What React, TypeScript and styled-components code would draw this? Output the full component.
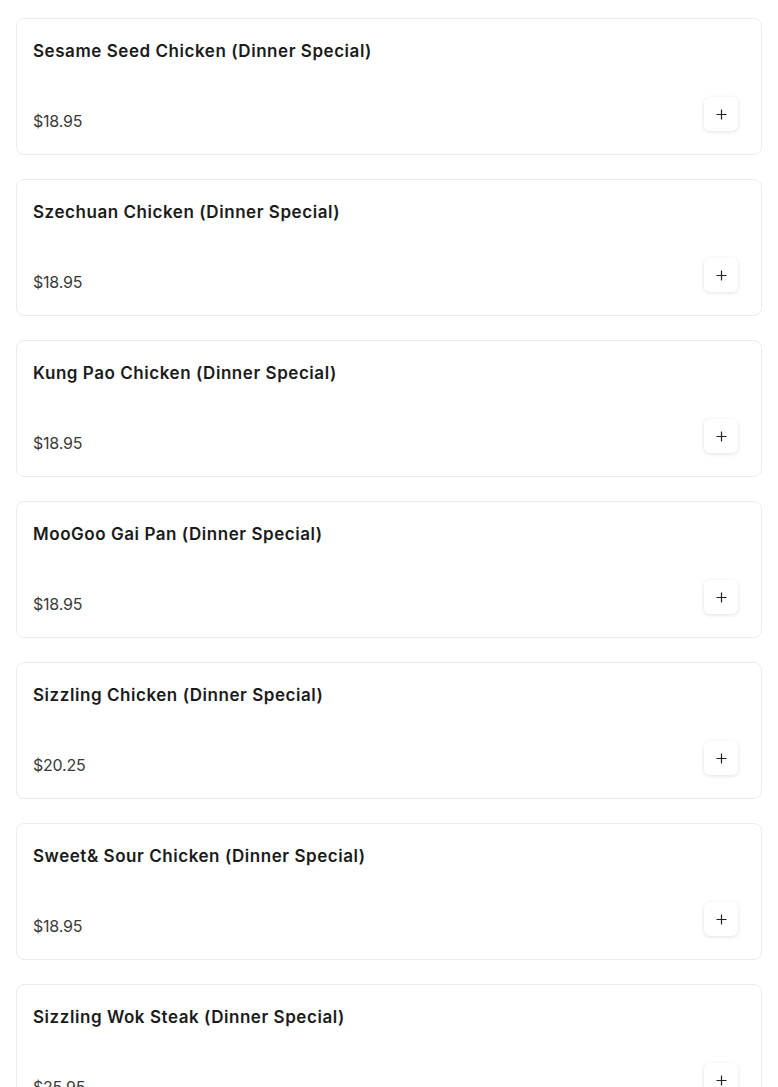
import React from "react";
import styled, { createGlobalStyle } from "styled-components";

const items = [
  { name: "Sesame Seed Chicken (Dinner Special)", price: "$18.95" },
  { name: "Szechuan Chicken (Dinner Special)", price: "$18.95" },
  { name: "Kung Pao Chicken (Dinner Special)", price: "$18.95" },
  { name: "MooGoo Gai Pan (Dinner Special)", price: "$18.95" },
  { name: "Sizzling Chicken (Dinner Special)", price: "$20.25" },
  { name: "Sweet& Sour Chicken (Dinner Special)", price: "$18.95" },
  { name: "Sizzling Wok Steak (Dinner Special)", price: "$25.95" },
];

const Global = createGlobalStyle`
  body {
    margin: 0;
    background: #fff;
    font-family: Inter, "Open Sans", sans-serif;
    color: #1a1a1a;
  }
`;

function PlusIcon() {
  return (
    <svg width="11" height="11" viewBox="0 0 11 11">
      <path d="M5.5 0.5v10M0.5 5.5h10" stroke="#222" strokeWidth="1.2" fill="none" />
    </svg>
  );
}

function App() {
  return (
    <>
      <Global />
      <List>
        {items.map((item) => (
          <Card key={item.name}>
            <Name>{item.name}</Name>
            <Bottom>
              <Price>{item.price}</Price>
              <AddButton aria-label="Add">
                <PlusIcon />
              </AddButton>
            </Bottom>
          </Card>
        ))}
      </List>
    </>
  );
}

export default App;

const List = styled.div`
  display: flex;
  flex-direction: column;
  gap: 24px;
  padding: 18px 16px;
`;

const Card = styled.div`
  display: flex;
  flex-direction: column;
  height: 137px;
  box-sizing: border-box;
  border: 1px solid #ececec;
  border-radius: 8px;
  padding: 21px 23px 22px 16px;
  background: #fff;
`;

const Name = styled.h3`
  margin: 0;
  font-size: 17px;
  line-height: 22px;
  font-weight: 600;
  letter-spacing: 0.55px;
  color: #1b1b1b;
`;

const Bottom = styled.div`
  display: flex;
  justify-content: space-between;
  align-items: flex-end;
  margin-top: auto;
`;

const Price = styled.span`
  font-size: 16px;
  line-height: 22px;
  letter-spacing: -0.2px;
  color: #3a3a3a;
`;

const AddButton = styled.button`
  display: flex;
  align-items: center;
  justify-content: center;
  width: 34px;
  height: 34px;
  margin-bottom: 1px;
  padding: 0;
  border: none;
  border-radius: 6px;
  background: #fff;
  box-shadow: 0 1px 4px rgba(0, 0, 0, 0.12);
  cursor: pointer;
`;
